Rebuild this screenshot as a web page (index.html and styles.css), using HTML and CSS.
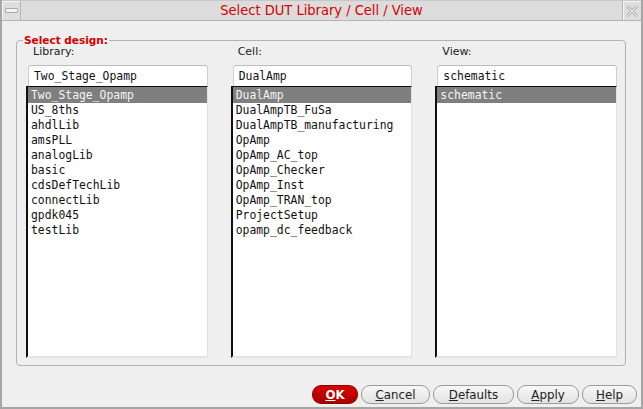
FILE: index.html
```html
<!DOCTYPE html>
<html>
<head>
<meta charset="utf-8">
<link rel="stylesheet" href="styles.css">
</head>
<body>
<div class="window">
  <div class="titlebar">
    <div class="tbtn min"><span class="minbar"></span></div>
    <div class="title">Select DUT Library / Cell / View</div>
    <div class="tbtn close">
      <svg width="16" height="16" viewBox="0 0 16 16">
        <path d="M3 3 L13 13 M13 3 L3 13" stroke="#b8b8b8" stroke-width="3" fill="none"/>
        <path d="M3 3 L13 13 M13 3 L3 13" stroke="#f4f4f4" stroke-width="1" fill="none"/>
      </svg>
    </div>
  </div>
  <div class="body">
    <div class="group">
      <div class="legend">Select design:</div>
      <div class="columns">
        <div class="col">
          <div class="label">Library:</div>
          <div class="input">Two_Stage_Opamp</div>
          <div class="list">
            <div class="item sel">Two_Stage_Opamp</div>
            <div class="item">US_8ths</div>
            <div class="item">ahdlLib</div>
            <div class="item">amsPLL</div>
            <div class="item">analogLib</div>
            <div class="item">basic</div>
            <div class="item">cdsDefTechLib</div>
            <div class="item">connectLib</div>
            <div class="item">gpdk045</div>
            <div class="item">testLib</div>
          </div>
        </div>
        <div class="col">
          <div class="label">Cell:</div>
          <div class="input">DualAmp</div>
          <div class="list">
            <div class="item sel">DualAmp</div>
            <div class="item">DualAmpTB_FuSa</div>
            <div class="item">DualAmpTB_manufacturing</div>
            <div class="item">OpAmp</div>
            <div class="item">OpAmp_AC_top</div>
            <div class="item">OpAmp_Checker</div>
            <div class="item">OpAmp_Inst</div>
            <div class="item">OpAmp_TRAN_top</div>
            <div class="item">ProjectSetup</div>
            <div class="item">opamp_dc_feedback</div>
          </div>
        </div>
        <div class="col">
          <div class="label">View:</div>
          <div class="input">schematic</div>
          <div class="list">
            <div class="item sel">schematic</div>
          </div>
        </div>
      </div>
    </div>
    <div class="buttons">
      <button class="btn ok"><u>O</u>K</button>
      <button class="btn w-cancel"><u>C</u>ancel</button>
      <button class="btn w-defaults"><u>D</u>efaults</button>
      <button class="btn w-apply"><u>A</u>pply</button>
      <button class="btn w-help"><u>H</u>elp</button>
    </div>
  </div>
</div>
</body>
</html>
```
FILE: styles.css
```css
html, body {
  margin: 0;
  padding: 0;
  background: #efefef;
}
.window {
  width: 643px;
  height: 409px;
  box-sizing: border-box;
  border-left: 2px solid #a6a6a6;
  border-right: 2px solid #a6a6a6;
  border-bottom: 2px solid #a6a6a6;
  background: #efefef;
  display: flex;
  flex-direction: column;
  font-family: "DejaVu Sans", sans-serif;
}
.titlebar {
  height: 21px;
  box-sizing: border-box;
  background: #dcdcdc;
  border-top: 1px solid #c8c8c8;
  border-bottom: 1px solid #b4b4b4;
  display: flex;
  align-items: stretch;
}
.tbtn {
  width: 19px;
  box-sizing: border-box;
  display: flex;
  align-items: center;
  justify-content: center;
  background: #dedede;
}
.tbtn.min {
  border-right: 1px solid #b4b4b4;
  box-shadow: inset 1px 1px 0 #f6f6f6;
}
.tbtn.close {
  border-left: 1px solid #b4b4b4;
  box-shadow: inset 1px 1px 0 #f6f6f6;
}
.minbar {
  width: 11px;
  height: 3px;
  background: #f4f4f4;
  border: 1px solid #a8a8a8;
  border-radius: 1px;
}
.title {
  flex: 1;
  text-align: center;
  color: #d40000;
  font-family: "DejaVu Sans Condensed", "DejaVu Sans", sans-serif;
  font-stretch: condensed;
  font-size: 14.5px;
  line-height: 19px;
}
.body {
  flex: 1;
  display: flex;
  flex-direction: column;
  padding: 19px 0 0 14px;
}
.group {
  position: relative;
  height: 326px;
  margin-right: 15px;
  box-sizing: border-box;
  border: 1px solid #b2b2b2;
  border-radius: 4px;
  padding: 4px 8px 0 9px;
}
.legend {
  position: absolute;
  left: 6px;
  top: -7px;
  padding: 0 1px 0 1px;
  background: #efefef;
  color: #d40000;
  font-weight: bold;
  font-size: 10.5px;
  line-height: 12px;
}
.columns {
  display: flex;
  gap: 23px;
}
.col {
  width: 182px;
  display: flex;
  flex-direction: column;
}
.label {
  font-size: 11px;
  line-height: 13px;
  color: #222;
  padding-left: 7px;
  height: 13px;
  margin-bottom: 7px;
}
.input {
  margin-left: 2px;
  height: 21px;
  box-sizing: border-box;
  background: #fff;
  border: 1px solid #cfcfcf;
  border-top-color: #bdbdbd;
  border-bottom: none;
  border-radius: 3px 3px 0 0;
  font-family: "DejaVu Sans Mono", monospace;
  font-size: 11.4px;
  line-height: 20px;
  padding-left: 5px;
  color: #111;
}
.list {
  height: 272px;
  box-sizing: border-box;
  background: #fff;
  border-left: 2px solid #101010;
  border-top: 1px solid #101010;
  border-right: 1px solid #e2e2e2;
  border-bottom: 2px solid #e4e4e4;
  font-family: "DejaVu Sans Mono", monospace;
  font-size: 11.4px;
  color: #111;
}
.item {
  height: 15px;
  line-height: 15px;
  padding-left: 3px;
  white-space: nowrap;
}
.item.sel {
  background: #7f7f7f;
  color: #f4f4f4;
  height: 16px;
  line-height: 16px;
}
.buttons {
  display: flex;
  justify-content: flex-end;
  gap: 3px;
  margin-top: 19px;
  padding-right: 4px;
}
.btn {
  height: 19px;
  box-sizing: border-box;
  border: 1px solid #9c9c9c;
  border-radius: 9px;
  background: linear-gradient(#f8f8f8, #e2e2e2);
  font-family: "DejaVu Sans", sans-serif;
  font-size: 11.8px;
  color: #222;
  padding: 0;
  line-height: 16px;
  text-align: center;
}
.btn.ok {
  width: 46px;
  background: linear-gradient(#d80000, #a80000);
  border-color: #900000;
  color: #fff;
  font-weight: bold;
}
.w-cancel { width: 69px; }
.w-defaults { width: 81px; }
.w-apply { width: 62px; }
.w-help { width: 55px; }
```
